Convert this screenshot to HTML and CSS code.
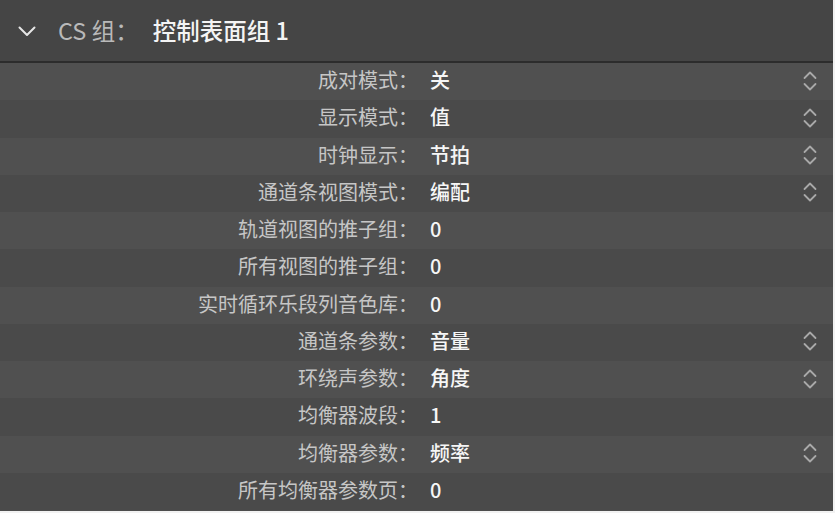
FILE: index.html
```html
<!DOCTYPE html>
<html lang="zh-CN">
<head>
    <meta charset="UTF-8">
    <title>CS 组</title>
    <link rel="stylesheet" href="styles.css">
</head>
<body>

<div class="panel">
    <div class="header">
        <svg class="disclosure" width="18" height="11" viewBox="0 0 18 11">
            <polyline points="1.5,1.5 9,9 16.5,1.5" fill="none" stroke="#e6e6e6" stroke-width="2" stroke-linecap="round" stroke-linejoin="round"/>
        </svg>
        <span class="header-label">CS 组：</span>
        <span class="header-value">控制表面组 1</span>
    </div>

    <div class="rows">
        <div class="row">
            <span class="label">成对模式：</span>
            <span class="value">关</span>
            <svg class="stepper" width="14" height="20" viewBox="0 0 14 20"><polyline points="1.5,7 7,1.5 12.5,7"/><polyline points="1.5,13 7,18.5 12.5,13"/></svg>
        </div>
        <div class="row">
            <span class="label">显示模式：</span>
            <span class="value">值</span>
            <svg class="stepper" width="14" height="20" viewBox="0 0 14 20"><polyline points="1.5,7 7,1.5 12.5,7"/><polyline points="1.5,13 7,18.5 12.5,13"/></svg>
        </div>
        <div class="row">
            <span class="label">时钟显示：</span>
            <span class="value">节拍</span>
            <svg class="stepper" width="14" height="20" viewBox="0 0 14 20"><polyline points="1.5,7 7,1.5 12.5,7"/><polyline points="1.5,13 7,18.5 12.5,13"/></svg>
        </div>
        <div class="row">
            <span class="label">通道条视图模式：</span>
            <span class="value">编配</span>
            <svg class="stepper" width="14" height="20" viewBox="0 0 14 20"><polyline points="1.5,7 7,1.5 12.5,7"/><polyline points="1.5,13 7,18.5 12.5,13"/></svg>
        </div>
        <div class="row">
            <span class="label">轨道视图的推子组：</span>
            <span class="value">0</span>
        </div>
        <div class="row">
            <span class="label">所有视图的推子组：</span>
            <span class="value">0</span>
        </div>
        <div class="row">
            <span class="label">实时循环乐段列音色库：</span>
            <span class="value">0</span>
        </div>
        <div class="row">
            <span class="label">通道条参数：</span>
            <span class="value">音量</span>
            <svg class="stepper" width="14" height="20" viewBox="0 0 14 20"><polyline points="1.5,7 7,1.5 12.5,7"/><polyline points="1.5,13 7,18.5 12.5,13"/></svg>
        </div>
        <div class="row">
            <span class="label">环绕声参数：</span>
            <span class="value">角度</span>
            <svg class="stepper" width="14" height="20" viewBox="0 0 14 20"><polyline points="1.5,7 7,1.5 12.5,7"/><polyline points="1.5,13 7,18.5 12.5,13"/></svg>
        </div>
        <div class="row">
            <span class="label">均衡器波段：</span>
            <span class="value">1</span>
        </div>
        <div class="row">
            <span class="label">均衡器参数：</span>
            <span class="value">频率</span>
            <svg class="stepper" width="14" height="20" viewBox="0 0 14 20"><polyline points="1.5,7 7,1.5 12.5,7"/><polyline points="1.5,13 7,18.5 12.5,13"/></svg>
        </div>
        <div class="row">
            <span class="label">所有均衡器参数页：</span>
            <span class="value">0</span>
        </div>
    </div>
</div>

</body>
</html>
```

FILE: styles.css
```css
/* Base */
body {
    margin: 0;
    background: #f2f2f2;
    font-family: "Noto Sans CJK SC", "Noto Sans", sans-serif;
}

.panel {
    width: 833px;
    height: 511px;
    background: #4d4d4d;
    overflow: hidden;
}

/* Header */
.header {
    height: 63px;
    background: #454545;
    border-bottom: 2px solid #2c2c2c;
    display: flex;
    align-items: center;
    padding-left: 18px;
    box-sizing: border-box;
    font-size: 23.5px;
    line-height: 1;
}

.disclosure {
    margin-right: 22px;
    margin-top: 1px;
}

.header-label {
    color: #b9b9b9;
    margin-right: 14px;
}

.header-value {
    color: #f4f4f4;
    font-weight: 500;
}

/* Rows */
.row {
    height: 37.25px;
    display: grid;
    grid-template-columns: 418px 1fr 14px;
    column-gap: 12px;
    align-items: center;
    padding-right: 16px;
    font-size: 20px;
    line-height: 1;
}

.row:nth-child(odd) {
    background: #505050;
}

.row:nth-child(even) {
    background: #4a4a4a;
}

.label {
    color: #c6c6c6;
    text-align: right;
    margin-bottom: 3px;
}

.value {
    color: #f6f6f6;
    font-weight: 500;
    margin-bottom: 3px;
}

.stepper {
    fill: none;
    stroke: #a9a9a9;
    stroke-width: 1.8;
    stroke-linecap: round;
    stroke-linejoin: round;
    margin-bottom: 2px;
}
```
